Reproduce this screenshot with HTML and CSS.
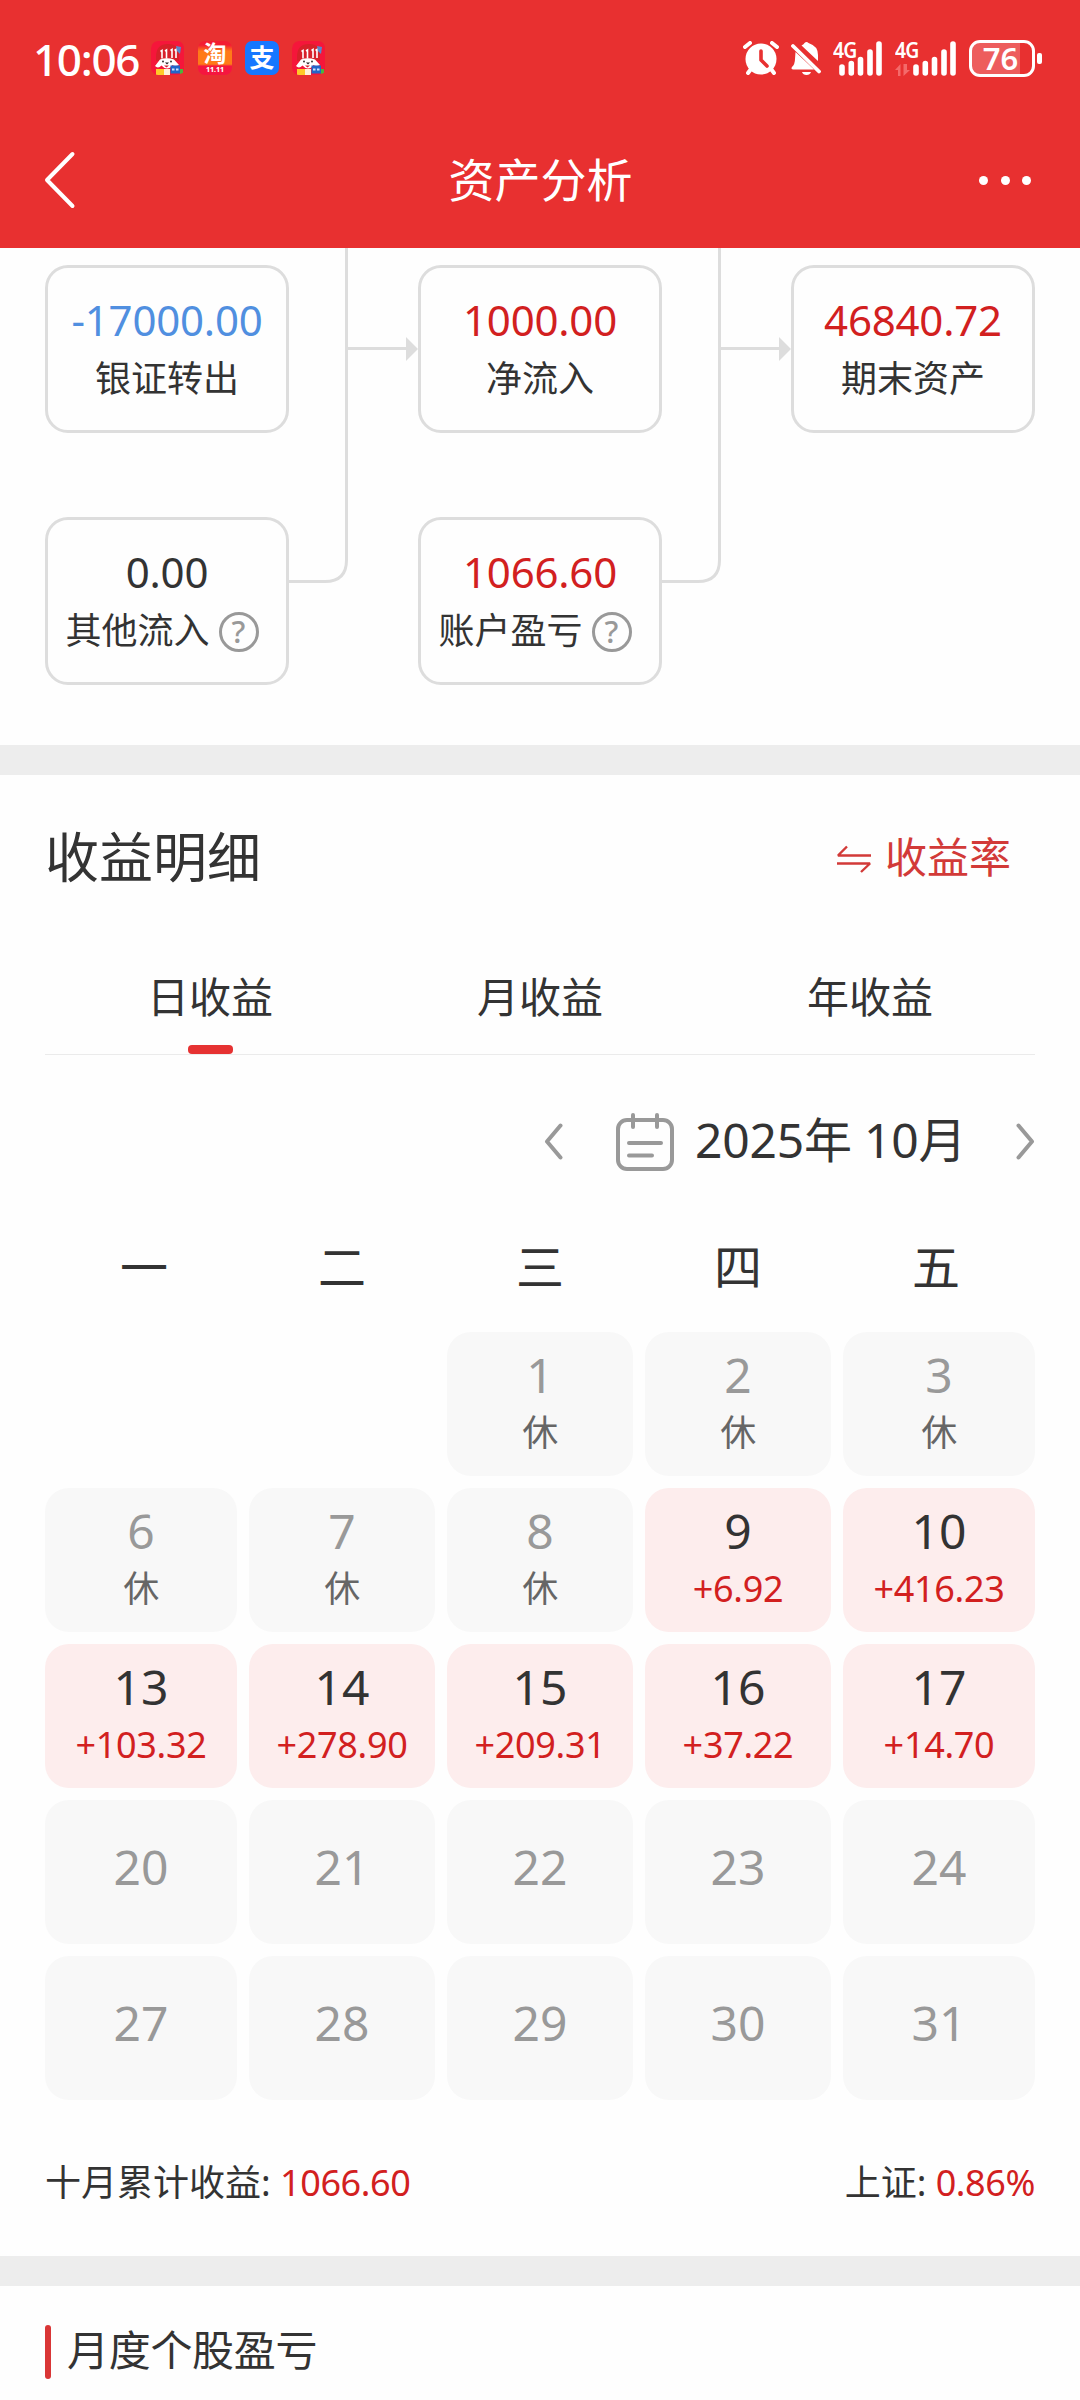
FILE: index.html
```html
<!DOCTYPE html>
<html lang="zh-CN">
<head>
<meta charset="utf-8">
<title>资产分析</title>
<link rel="stylesheet" href="styles.css">
</head>
<body>
<svg class="defs" width="0" height="0" aria-hidden="true">
  <defs>
    <symbol id="i-jd" viewBox="0 0 34 34">
      <rect width="33" height="34" rx="7" fill="#f5163a"/>
      <path d="M5 16Q5 3 17 3T28 16V20H5Z" fill="#d8202a"/>
      <path d="M9.500 10.500l1.500-1v8M14 10l1.500-1v8.500M19.500 9.500l1.500-1v8.500M23.500 9.500l1.500-1v8.500" fill="none" stroke="#fff" stroke-width="1.600"/>
      <path d="M25 5l5 1-1 7-3-3z" fill="#5a86cc"/>
      <path d="M4 25L9 18.500Q16 16 23 18.500L28 24Q24 26 21.500 24Q19 27.500 16 27.500T10.500 24.500Q7 28 4 25Z" fill="#fff"/>
      <circle cx="12" cy="20.500" r=".9" fill="#222"/><circle cx="20" cy="20.500" r=".9" fill="#222"/>
      <path d="M14 21.500h4l-2 2z" fill="#222"/>
      <path d="M13 24.500h5l-2.500 2z" fill="#d8202a"/>
      <rect x="5" y="28" width="8" height="6" fill="#ffc928"/><rect x="13" y="28" width="6" height="6" fill="#fff1d8"/>
      <rect x="19.500" y="24.500" width="9.500" height="8" fill="#2166c8"/><path d="M21 28.500h2.500M25 28.500h2.500" stroke="#cfe0ff" stroke-width="1.800"/>
      <path d="M29 28h3v4l-3 1z" fill="#4cb43c"/>
    </symbol>
    <symbol id="i-4g-bars" viewBox="0 0 44 35">
      <path d="M3 26v6M12.300 22.500v9.500M21.500 18.500v13.500M31 11v21M40 3v29" stroke="#fff" stroke-width="5.600" stroke-linecap="round"/>
    </symbol>
  </defs>
</svg>

<header class="topbar">
  <div class="status">
    <span class="clock">10:06</span>
    <div class="apps">
      <svg class="app"><use href="#i-jd"/></svg>
      <span class="app tao"><b>淘</b><i>11.11</i></span>
      <span class="app pay">支</span>
      <svg class="app"><use href="#i-jd"/></svg>
    </div>
    <div class="system">
      <svg class="alarm" viewBox="0 0 36 34">
        <g stroke="#fff" stroke-width="4" stroke-linecap="round"><path d="M2 6l5-4M34 6l-5-4M8 28l-3 4M28 28l3 4"/></g>
        <circle cx="18" cy="18" r="15.500" fill="#fff"/>
        <path d="M18 10v9l6 6" fill="none" stroke="#e83030" stroke-width="3.600" stroke-linecap="round" stroke-linejoin="round"/>
      </svg>
      <svg class="bell" viewBox="0 0 30 34">
        <path d="M10.500 4.500Q13 3 13.500 2Q15.500 0 17.500 2Q27 5 27 14V20Z" fill="#fff"/>
        <path d="M4.500 11L21 26.500L23 28.500H2Q-.500 28 1 26Q4 23 4 18Z" fill="#fff"/>
        <path d="M11 31h9q-1 3-4.500 3T11 31z" fill="#fff"/>
        <path d="M2 5L28 30.500" stroke="#fff" stroke-width="3.800" stroke-linecap="round"/>
      </svg>
      <div class="signal"><span>4G</span><svg><use href="#i-4g-bars"/></svg></div>
      <div class="signal two"><span>4G</span>
        <svg class="updown" viewBox="0 0 15 12"><path d="M5.500 12V0L0 6h3v6zM8.500 0v12L15 6h-3V0z" fill="#f46a6a"/></svg>
        <svg><use href="#i-4g-bars"/></svg></div>
      <div class="battery"><div class="shell">76</div><div class="nub"></div></div>
    </div>
  </div>
  <nav class="titlebar">
    <svg class="back" viewBox="0 0 32 58"><path d="M28.500 3L3 29L28.500 55" fill="none" stroke="#fff" stroke-width="4" stroke-linecap="round" stroke-linejoin="round"/></svg>
    <h1>资产分析</h1>
    <div class="more"><i></i><i></i><i></i></div>
  </nav>
</header>

<section class="flow">
  <div class="node"><b class="blue">-17000.00</b><span>银证转出</span></div>
  <svg class="link" viewBox="0 0 129 435">
    <g fill="none" stroke="#ddd" stroke-width="3"><path d="M0 333.500H36Q57.500 333.500 57.500 312V0M57.500 100.500H118"/></g>
    <path d="M117 89v24l12-12z" fill="#ddd"/>
  </svg>
  <div class="node"><b class="red">1000.00</b><span>净流入</span></div>
  <svg class="link" viewBox="0 0 129 435">
    <g fill="none" stroke="#ddd" stroke-width="3"><path d="M0 333.500H36Q57.500 333.500 57.500 312V0M57.500 100.500H118"/></g>
    <path d="M117 89v24l12-12z" fill="#ddd"/>
  </svg>
  <div class="node"><b class="red">46840.72</b><span>期末资产</span></div>
  <div class="node lower"><b>0.00</b><span class="hint">其他流入<em>?</em></span></div>
  <div class="node lower mid"><b class="red">1066.60</b><span class="hint">账户盈亏<em>?</em></span></div>
</section>

<section class="detail">
  <div class="head">
    <h2>收益明细</h2>
    <a class="switch"><svg viewBox="0 0 36 28"><path d="M11 1.500L2 10.500H35M1 18.500H34L25 27" fill="none" stroke="#d23a38" stroke-width="2.400" stroke-linejoin="bevel"/></svg>收益率</a>
  </div>
  <div class="tabs"><a class="on">日收益</a><a>月收益</a><a>年收益</a></div>
  <div class="month">
    <svg class="arrow" viewBox="0 0 19 37"><path d="M16.500 2.500L3 18.500L16.500 34.500" /></svg>
    <svg class="cal" viewBox="0 0 58 58"><rect x="2" y="7" width="54" height="49" rx="9"/><path d="M17 2v12M41 2v12M13 30h32M13 42.500h23"/></svg>
    <span>2025年 10月</span>
    <svg class="arrow" viewBox="0 0 19 37"><path d="M2.500 2.500L16 18.500L2.500 34.500"/></svg>
  </div>
  <div class="week"><span>一</span><span>二</span><span>三</span><span>四</span><span>五</span></div>
  <div class="days">
    <div class="day first"><b>1</b><span>休</span></div><div class="day"><b>2</b><span>休</span></div><div class="day"><b>3</b><span>休</span></div>
    <div class="day"><b>6</b><span>休</span></div><div class="day"><b>7</b><span>休</span></div><div class="day"><b>8</b><span>休</span></div><div class="day up"><b>9</b><span>+6.92</span></div><div class="day up"><b>10</b><span>+416.23</span></div>
    <div class="day up"><b>13</b><span>+103.32</span></div><div class="day up"><b>14</b><span>+278.90</span></div><div class="day up"><b>15</b><span>+209.31</span></div><div class="day up"><b>16</b><span>+37.22</span></div><div class="day up"><b>17</b><span>+14.70</span></div>
    <div class="day idle"><b>20</b></div><div class="day idle"><b>21</b></div><div class="day idle"><b>22</b></div><div class="day idle"><b>23</b></div><div class="day idle"><b>24</b></div>
    <div class="day idle"><b>27</b></div><div class="day idle"><b>28</b></div><div class="day idle"><b>29</b></div><div class="day idle"><b>30</b></div><div class="day idle"><b>31</b></div>
  </div>
  <div class="summary"><span>十月累计收益: <b class="red">1066.60</b></span><span>上证: <b class="red">0.86%</b></span></div>
</section>

<section class="stocks"><h3>月度个股盈亏</h3></section>
</body>
</html>
```
FILE: styles.css
```css
* { box-sizing: border-box; margin: 0; padding: 0; }
html, body { width: 1080px; height: 2400px; overflow: hidden; }
body { background: #fefefe; color: #333; font-family: "Noto Sans", "Noto Sans CJK SC", sans-serif; }
b, i, em, h1, h2, h3 { font-weight: 400; font-style: normal; }
svg { display: block; flex: none; }
.defs { position: absolute; }
.red { color: #d2201f; }
.blue { color: #508fe0; }

.topbar { height: 248px; background: #e83030; color: #fff; }
.status { height: 112px; padding: 4px 38px 0 33px; display: flex; align-items: center; }
.clock { width: 118px; font-size: 44px; font-weight: 500; line-height: 60px; letter-spacing: -1.3px; padding-top: 1px; }
.apps { display: flex; gap: 13px; }
.app { width: 34px; height: 34px; border-radius: 7px; }
.tao { display: flex; flex-direction: column; align-items: center; background: linear-gradient(#f31d32 0 12%, #ff7a18 30% 68%, #f5163f 74%); }
.tao b { font-size: 23px; line-height: 25px; font-weight: 700; }
.tao i { font-size: 7px; line-height: 8px; font-weight: 800; }
.pay { background: #1677ff; text-align: center; font-size: 25px; line-height: 33px; font-weight: 700; }
.system { margin-left: auto; display: flex; align-items: center; }
.alarm { width: 36px; height: 34px; margin-right: 12px; }
.bell { width: 30px; height: 34px; margin-right: 12px; }
.signal { width: 50px; height: 34px; margin-right: 12px; display: grid; justify-items: end; }
.signal > * { grid-area: 1 / 1; }
.signal span { justify-self: start; font-size: 22px; line-height: 17px; font-weight: 600; letter-spacing: -1px; transform: scaleX(.88); transform-origin: left; height: 17px; }
.signal svg { width: 44px; height: 35px; }
.signal.two { width: 62px; }
.signal .updown { width: 15px; height: 12px; justify-self: start; align-self: end; }
.battery { display: flex; align-items: center; gap: 2px; }
.shell { width: 66px; height: 37px; border: 3px solid #fff; border-radius: 11px; background: linear-gradient(90deg, rgba(255,255,255,.22) 80%, transparent 80%); font-size: 31px; line-height: 31px; font-weight: 600; text-align: center; padding-right: 3px; }
.nub { width: 5px; height: 11px; border-radius: 2px; background: #fff; }
.titlebar { height: 136px; padding: 0 49px 0 44px; display: flex; align-items: center; justify-content: space-between; }
.back { width: 32px; height: 58px; }
h1 { font-size: 46px; line-height: 60px; padding: 0 0 2px 26px; }
.more { display: flex; gap: 12.400px; }
.more i { width: 9px; height: 9px; border-radius: 50%; background: #fff; }

.flow { height: 497px; padding: 17px 45px 0; display: grid; grid-template-columns: 244px 129px 244px 129px 244px; grid-template-rows: 168px 168px; row-gap: 84px; }
.node { border: 3px solid #ddd; border-radius: 23px; padding-top: 23px; display: flex; flex-direction: column; align-items: center; grid-row: 1; }
.node b { font-size: 42px; line-height: 58px; letter-spacing: -.2px; }
.node span { font-size: 36px; line-height: 60px; }
.lower { grid-row: 2; grid-column: 1; }
.mid { grid-column: 3; }
.link { width: 129px; height: 435px; grid-row: 1 / 3; margin-top: -17px; }
.node .hint { display: flex; align-items: center; padding-right: 10px; }
.hint em { width: 40px; height: 40px; margin: 1px 0 0 9px; border: 3px solid #999; border-radius: 50%; color: #999; font-size: 31px; line-height: 33px; font-weight: 500; text-align: center; }

.detail { border-top: 30px solid #ededed; border-bottom: 30px solid #ededed; height: 1541px; padding: 0 45px; }
.head { height: 164px; display: flex; justify-content: space-between; align-items: center; padding-right: 24px; }
h2 { font-size: 54px; line-height: 70px; }
.switch { display: flex; align-items: center; gap: 13px; font-size: 42px; line-height: 60px; color: #d23a38; }
.switch svg { width: 36px; height: 28px; margin-top: 4px; }
.tabs { height: 116px; border-bottom: 1px solid #ebebeb; display: flex; }
.tabs a { flex: 1; height: 115px; display: flex; flex-direction: column; align-items: center; font-size: 42px; line-height: 60px; padding-top: 28px; }
.tabs .on::after { content: ""; width: 45px; height: 9px; border-radius: 4px; background: #e63232; margin-top: 18px; }
.month { height: 170px; display: flex; align-items: center; justify-content: flex-end; font-size: 48px; line-height: 70px; padding-top: 3px; }
.month span { width: 267px; margin: 0 54px 4px 21px; white-space: nowrap; letter-spacing: -.2px; }
.arrow { width: 19px; height: 37px; }
.arrow path, .cal rect, .cal path { fill: none; stroke: #999; stroke-width: 4; stroke-linecap: round; stroke-linejoin: round; }
.cal { width: 58px; height: 58px; margin-left: 53px; }
.week { display: flex; height: 107px; font-size: 48px; line-height: 84px; }
.week span { flex: 1; text-align: center; }
.days { display: grid; grid-template-columns: 192px 186px 186px 186px 192px; grid-auto-rows: 144px; gap: 12px; }
.first { grid-column: 3; }
.day { background: #f8f8f8; border-radius: 24px; display: flex; flex-direction: column; align-items: center; padding-top: 9px; }
.day b { font-size: 48px; line-height: 68px; color: #999; }
.day span { font-size: 36px; line-height: 48px; color: #666; letter-spacing: -.3px; }
.day.up { background: #fdeded; }
.day.up b { color: #333; }
.day.up span { color: #d2201f; }
.day.idle { padding-top: 33px; }
.summary { display: flex; justify-content: space-between; padding-top: 53px; font-size: 36px; line-height: 60px; }
.summary b { letter-spacing: -.4px; }

.stocks { padding: 39px 45px 0; }
h3 { display: flex; gap: 16px; font-size: 42px; line-height: 50px; letter-spacing: -.3px; }
h3::before { content: ""; width: 6px; height: 54px; border-radius: 3px; background: #d93636; }
```
